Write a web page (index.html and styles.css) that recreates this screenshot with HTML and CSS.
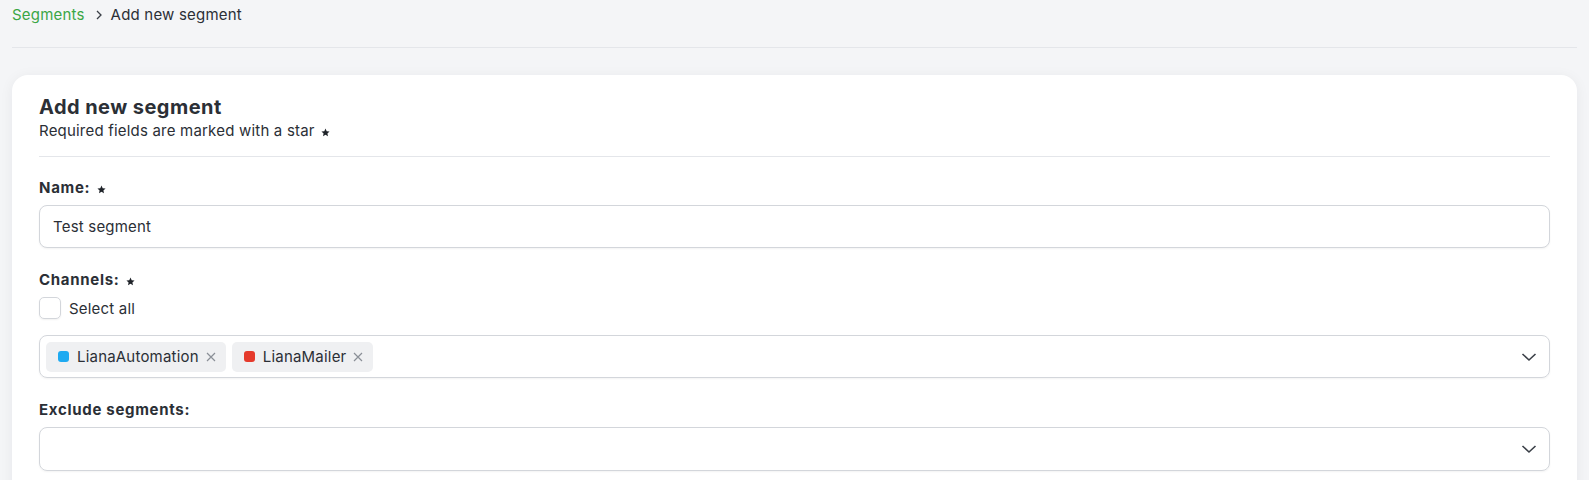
FILE: index.html
```html
<!DOCTYPE html>
<html lang="en">

<head>
    <meta charset="UTF-8">
    <title>Add new segment</title>
    <link rel="stylesheet" href="styles.css">
</head>

<body>

    <div class="page">
        <nav class="breadcrumb">
            <a href="#">Segments</a>
            <svg class="crumb-sep" width="8" height="10" viewBox="0 0 8 10">
                <polyline points="2,1 6,5 2,9" fill="none" stroke="#3a3f47" stroke-width="1.3" />
            </svg>
            <span>Add new segment</span>
        </nav>

        <div class="card">
            <h2>Add new segment</h2>
            <p class="hint">Required fields are marked with a star
                <svg class="star" width="9" height="9" viewBox="0 0 24 24">
                    <path d="M12 1.5l3.2 7 7.6.8-5.7 5.2 1.6 7.5L12 18.1 5.3 22l1.6-7.5L1.2 9.3l7.6-.8z" fill="#1f2329" />
                </svg>
            </p>
            <hr>

            <div class="field">
                <label for="name">Name:
                    <svg class="star" width="9" height="9" viewBox="0 0 24 24">
                        <path d="M12 1.5l3.2 7 7.6.8-5.7 5.2 1.6 7.5L12 18.1 5.3 22l1.6-7.5L1.2 9.3l7.6-.8z" fill="#1f2329" />
                    </svg>
                </label>
                <input type="text" id="name" value="Test segment">
            </div>

            <div class="field">
                <label>Channels:
                    <svg class="star" width="9" height="9" viewBox="0 0 24 24">
                        <path d="M12 1.5l3.2 7 7.6.8-5.7 5.2 1.6 7.5L12 18.1 5.3 22l1.6-7.5L1.2 9.3l7.6-.8z" fill="#1f2329" />
                    </svg>
                </label>
                <div class="check-row">
                    <span class="checkbox"></span>
                    <span>Select all</span>
                </div>
                <div class="select">
                    <div class="tags">
                        <span class="tag"><i class="dot blue"></i>LianaAutomation
                            <svg class="x" width="10" height="10" viewBox="0 0 10 10">
                                <path d="M1 1L9 9M9 1L1 9" stroke="#8a8f97" stroke-width="1.2" />
                            </svg>
                        </span>
                        <span class="tag"><i class="dot red"></i>LianaMailer
                            <svg class="x" width="10" height="10" viewBox="0 0 10 10">
                                <path d="M1 1L9 9M9 1L1 9" stroke="#8a8f97" stroke-width="1.2" />
                            </svg>
                        </span>
                    </div>
                    <svg class="caret" width="16" height="10" viewBox="0 0 16 10">
                        <polyline points="1.5,2 8,8 14.5,2" fill="none" stroke="#3a3f47" stroke-width="1.6" />
                    </svg>
                </div>
            </div>

            <div class="field">
                <label>Exclude segments:</label>
                <div class="select tall">
                    <div class="tags"></div>
                    <svg class="caret" width="16" height="10" viewBox="0 0 16 10">
                        <polyline points="1.5,2 8,8 14.5,2" fill="none" stroke="#3a3f47" stroke-width="1.6" />
                    </svg>
                </div>
            </div>
        </div>
    </div>

</body>

</html>
```

FILE: styles.css
```css
body {
    margin: 0;
    font-family: Inter, 'Noto Sans', sans-serif;
    font-size: 15px;
    letter-spacing: 0.2px;
    color: #2b2f36;
    background: #f4f5f7;
    overflow: hidden;
}

.page {
    padding: 0 12px;
}

.breadcrumb {
    display: flex;
    align-items: center;
    gap: 9px;
    height: 48px;
    padding-bottom: 18px;
    box-sizing: border-box;
    border-bottom: 1px solid #e4e6ea;
    line-height: 18px;
}

.breadcrumb a {
    color: #3aa645;
    text-decoration: none;
}

.crumb-sep {
    margin: 0 -1px 0 1px;
}

.card {
    margin-top: 27px;
    background: #fff;
    border-radius: 16px;
    padding: 18px 27px 20px;
    box-shadow: 0 2px 14px rgba(20, 30, 50, 0.06);
}

h2 {
    margin: 0;
    font-size: 20px;
    font-weight: 700;
    line-height: 28px;
    color: #2b2f36;
    letter-spacing: 0.45px;
}

.hint {
    margin: 0;
    line-height: 20px;
    color: #2b2f36;
}

.star {
    vertical-align: -0.5px;
    margin-left: 2px;
}

hr {
    border: none;
    border-top: 1px solid #e4e6ea;
    margin: 15px 0 21px;
}

.field {
    margin-bottom: 22px;
}

label {
    display: block;
    font-weight: 700;
    line-height: 20px;
    margin-bottom: 7px;
    color: #2b2f36;
    letter-spacing: 0.7px;
}

input {
    display: block;
    width: 100%;
    box-sizing: border-box;
    height: 43px;
    padding: 0 13px;
    border: 1px solid #d3d6db;
    border-radius: 8px;
    font-family: inherit;
    font-size: 15px;
    letter-spacing: 0.2px;
    color: #2b2f36;
    box-shadow: 0 1px 2px rgba(0, 0, 0, 0.05);
}

.check-row {
    display: flex;
    align-items: center;
    gap: 8px;
    height: 22px;
    margin-bottom: 16px;
}

.checkbox {
    width: 20px;
    height: 20px;
    border: 1px solid #d3d6db;
    border-radius: 5px;
    box-shadow: 0 1px 2px rgba(0, 0, 0, 0.06);
}

.select {
    display: flex;
    align-items: center;
    height: 43px;
    box-sizing: border-box;
    padding: 0 12px 0 6px;
    border: 1px solid #d3d6db;
    border-radius: 8px;
    box-shadow: 0 1px 2px rgba(0, 0, 0, 0.05);
}

.select.tall {
    height: 44px;
}

.tags {
    flex: 1;
    display: flex;
    gap: 6px;
}

.tag {
    display: flex;
    align-items: center;
    height: 30px;
    padding: 0 10px 0 12px;
    background: #eff0f2;
    border-radius: 5px;
    color: #2b2f36;
}

.dot {
    width: 11px;
    height: 11px;
    border-radius: 3px;
    margin-right: 8px;
}

.dot.blue {
    background: #1eaaf1;
}

.dot.red {
    background: #e53a2c;
}

.x {
    margin-left: 7px;
}

.caret {
    flex: none;
}
```
